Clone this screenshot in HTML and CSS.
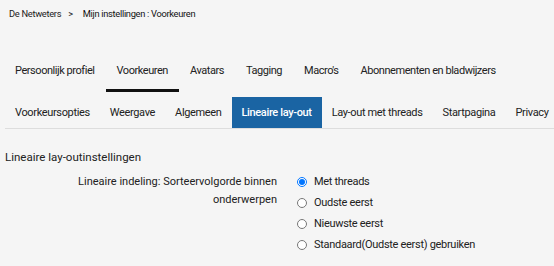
FILE: index.html
```html
<!DOCTYPE html>
<html lang="nl">
<head>
  <meta charset="UTF-8" />
  <title>Mijn instellingen : Voorkeuren</title>
  <link rel="stylesheet" href="styles.css">
</head>
<body>
  <div class="crumbs">
    <a href="#">De Netweters</a>
    <span class="sep">&gt;</span>
    <span class="current">Mijn instellingen : Voorkeuren</span>
  </div>

  <nav class="tabs">
    <a href="#">Persoonlijk profiel</a>
    <a href="#" class="active">Voorkeuren</a>
    <a href="#">Avatars</a>
    <a href="#">Tagging</a>
    <a href="#">Macro's</a>
    <a href="#">Abonnementen en bladwijzers</a>
  </nav>

  <nav class="subtabs">
    <a href="#">Voorkeursopties</a>
    <a href="#">Weergave</a>
    <a href="#">Algemeen</a>
    <a href="#" class="active">Lineaire lay-out</a>
    <a href="#">Lay-out met threads</a>
    <a href="#">Startpagina</a>
    <a href="#">Privacy</a>
  </nav>

  <h2 class="section-title">Lineaire lay-outinstellingen</h2>

  <div class="field">
    <div class="field-label">Lineaire indeling: Sorteervolgorde binnen<br>onderwerpen</div>
    <div class="options">
      <label><input type="radio" name="sort" checked> Met threads</label>
      <label><input type="radio" name="sort"> Oudste eerst</label>
      <label><input type="radio" name="sort"> Nieuwste eerst</label>
      <label><input type="radio" name="sort"> Standaard(Oudste eerst) gebruiken</label>
    </div>
  </div>
</body>
</html>
```

FILE: styles.css
```css
body {
  font-family: Roboto, 'Liberation Sans', sans-serif;
  margin: 0; padding: 0;
  background: #f5f5f5;
  color: #222;
  font-size: 11px;
  line-height: 14px;
  white-space: nowrap;
  overflow: hidden;
}
a { color: #222; text-decoration: none; }

.crumbs {
  padding: 7px 9px 0;
  font-size: 9.3px;
  letter-spacing: -0.3px;
  line-height: 13px;
  display: flex;
  gap: 7px;
}
.crumbs .sep { margin-right: 3px; }
.crumbs .current { color: #111; }

.tabs {
  display: flex;
  padding: 44px 0 0 4px;
  letter-spacing: -0.45px;
}
.tabs a {
  padding: 0 11px 11px;
  border-bottom: 3px solid transparent;
}
.tabs a.active { border-bottom-color: #111; }

.subtabs {
  display: flex;
  margin: 5px 0 0 5px;
  border-bottom: 1px solid #ddd;
  letter-spacing: -0.35px;
}
.subtabs a {
  padding: 9px 10px 8px;
}
.subtabs a.active {
  background: #1a64a3;
  color: white;
  font-weight: 500;
}

.section-title {
  font-size: 11.5px;
  font-weight: normal;
  line-height: 14px;
  margin: 21px 0 0 5px;
}

.field {
  display: flex;
  gap: 20px;
  margin-top: 7px;
}
.field-label {
  width: 277px;
  text-align: right;
  line-height: 18px;
  padding-top: 2px;
}
.options {
  display: flex;
  flex-direction: column;
  letter-spacing: -0.3px;
}
.options label {
  display: flex;
  align-items: center;
  gap: 7px;
  height: 21px;
}
.options input {
  margin: 0;
  width: 10px; height: 10px;
}
```
